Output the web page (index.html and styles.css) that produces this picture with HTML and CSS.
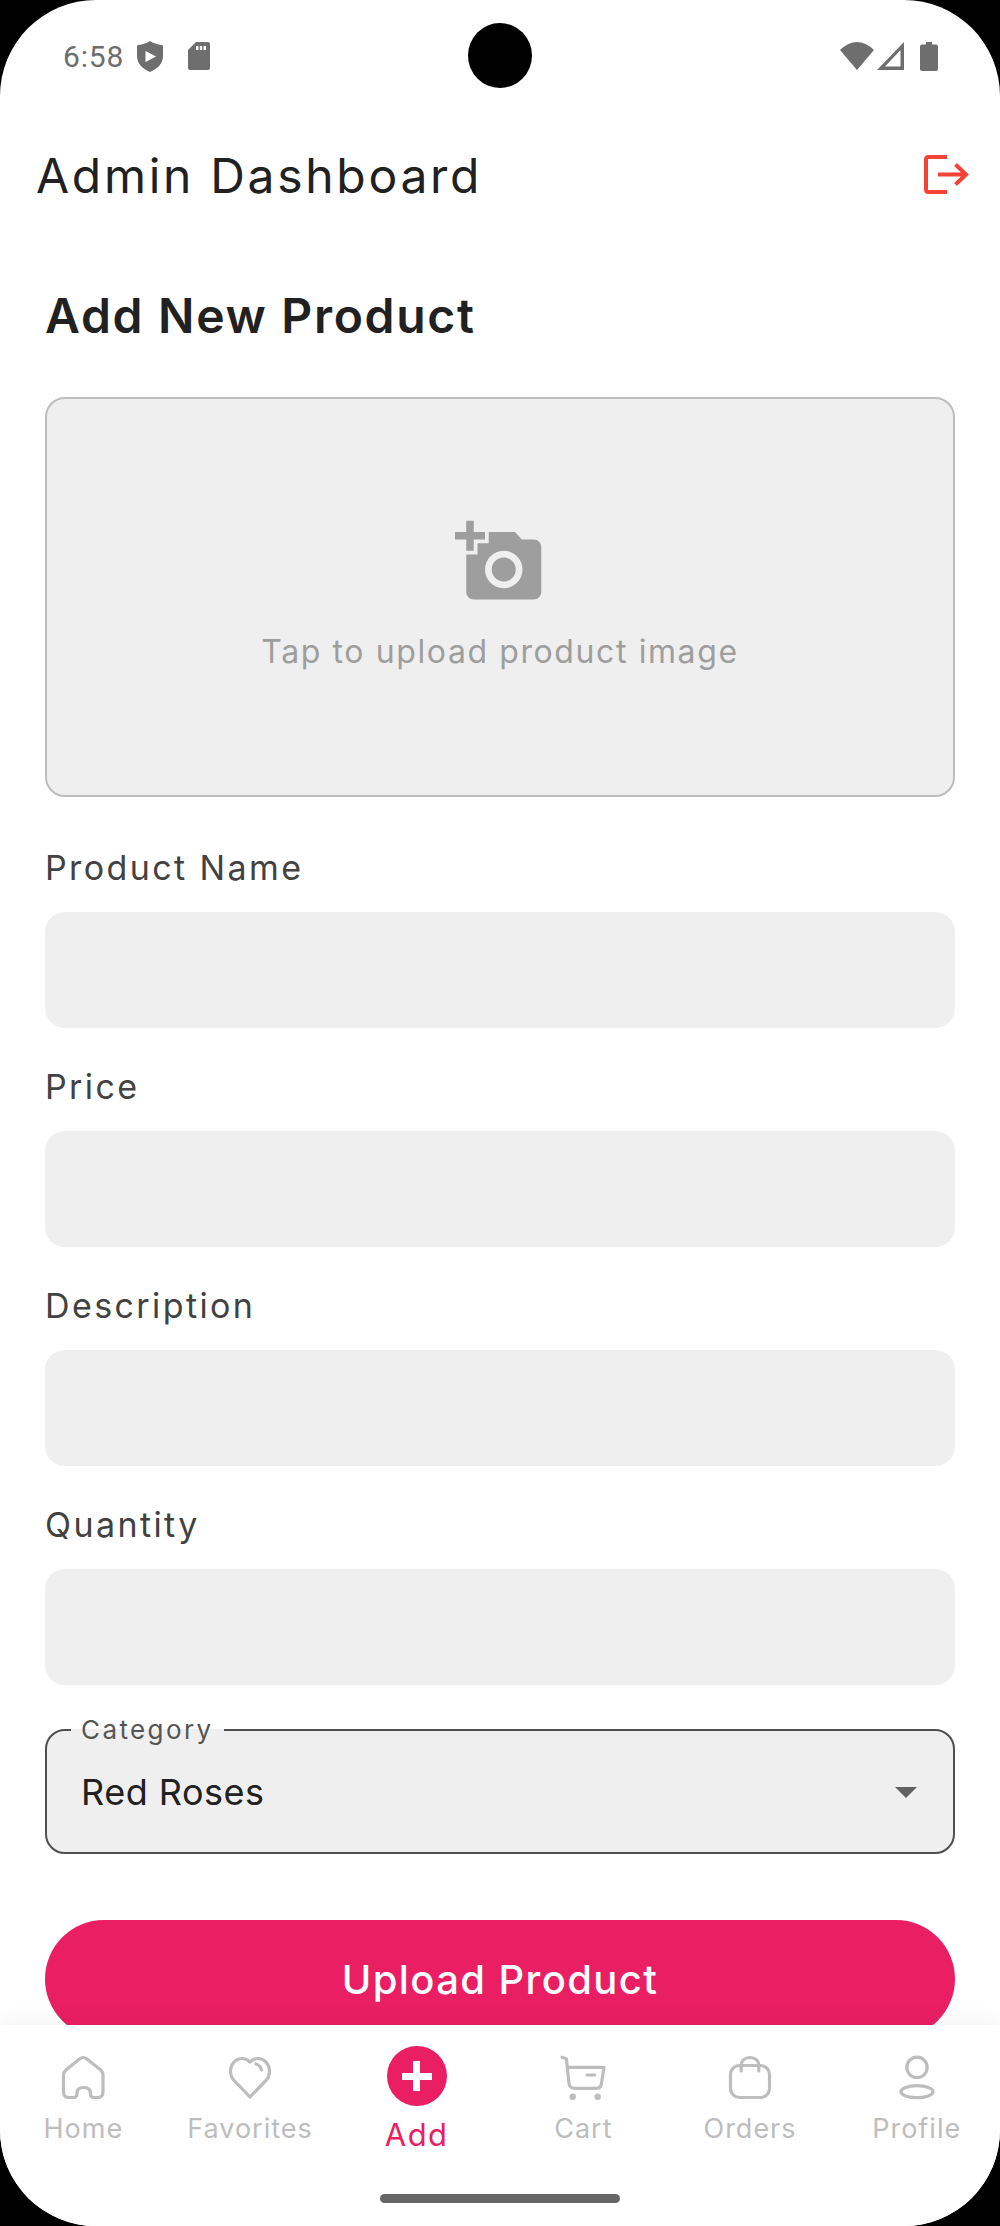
FILE: index.html
```html
<!DOCTYPE html>
<html lang="en">
<head>
  <meta charset="UTF-8">
  <meta name="viewport" content="width=device-width, initial-scale=1.0">
  <title>Admin Dashboard</title>
  <link rel="stylesheet" href="styles.css">
</head>
<body>
  <div class="screen">
    <div class="camera-hole"></div>

    <div class="status-bar">
      <div class="status-group">
        <span class="time">6:58</span>
        <svg class="icon-shield" viewBox="0 0 26 31"><path class="status-fill" d="M13 0C16 2 20 3.5 25 4Q26 4.5 26 6V15C26 23 20 28 13 31C6 28 0 23 0 15V6Q0 4.5 1 4C6 3.5 10 2 13 0Z"/><path fill="#fff" d="M8.5 10L19 15.5L8.5 21Z"/></svg>
        <svg class="icon-sd" viewBox="0 0 22 28"><path class="status-fill" d="M8 0H20Q22 0 22 2V26Q22 28 20 28H2Q0 28 0 26V8Z"/><path fill="#fff" d="M8 4h2.4v4H8zM11.8 4h2.4v4h-2.4zM15.6 4H18v4h-2.4z"/></svg>
      </div>
      <div class="status-group status-right">
        <svg class="icon-wifi" viewBox="0 0 34 28"><path class="status-fill" d="M0 8Q17 -8 34 8L17 28Z"/></svg>
        <svg class="icon-signal" viewBox="0 0 27 28"><path class="status-fill" fill-rule="evenodd" d="M27 0V28H0ZM23.5 8L8 24.5H23.5Z"/></svg>
        <svg class="icon-battery" viewBox="0 0 18 29"><path class="status-fill" d="M6 0H12V2.5H16Q18 2.5 18 4.5V27Q18 29 16 29H2Q0 29 0 27V4.5Q0 2.5 2 2.5H6Z"/></svg>
      </div>
    </div>

    <header class="app-bar">
      <h1 class="app-title">Admin Dashboard</h1>
      <svg class="icon-logout" viewBox="0 0 48 48"><path d="M25 6H6.5Q4 6 4 8.5V38.5Q4 41 6.5 41H25M16 23.5H44M33.5 13.5L44 23.5L33.5 33.5"/></svg>
    </header>

    <main class="content">
      <h2 class="page-title">Add New Product</h2>

      <div class="upload-box">
        <svg class="icon-photo" viewBox="0 0 24 24"><path fill-rule="evenodd" d="M3 4V1h2v3h3v2H5v3H3V6H0V4h3zm3 6V7h3V4h7l1.83 2H21c1.1 0 2 .9 2 2v12c0 1.1-.9 2-2 2H5c-1.1 0-2-.9-2-2V10h3zm7 9c2.76 0 5-2.24 5-5s-2.24-5-5-5-5 2.24-5 5 2.24 5 5 5zm-3.2-5c0 1.77 1.43 3.2 3.2 3.2s3.2-1.43 3.2-3.2-1.43-3.2-3.2-3.2-3.2 1.43-3.2 3.2z"/></svg>
        <span class="upload-text">Tap to upload product image</span>
      </div>

      <div class="field">
        <label class="field-label">Product Name</label>
        <div class="field-input"></div>
      </div>
      <div class="field">
        <label class="field-label">Price</label>
        <div class="field-input"></div>
      </div>
      <div class="field">
        <label class="field-label">Description</label>
        <div class="field-input"></div>
      </div>
      <div class="field">
        <label class="field-label">Quantity</label>
        <div class="field-input"></div>
      </div>

      <fieldset class="select-box">
        <legend class="select-legend">Category</legend>
        <div class="select-row">
          <span class="select-value">Red Roses</span>
          <span class="select-arrow"></span>
        </div>
      </fieldset>

      <button class="upload-btn">Upload Product</button>
    </main>

    <nav class="bottom-nav">
      <div class="nav-row">
        <div class="nav-item">
          <svg class="nav-icon" viewBox="0 0 48 48"><path d="M24.2 4.5C22.8 4.5 21.8 5 20.8 5.8L7.5 16.5C5.5 18.2 4.5 19.8 4.5 22V39C4.5 42.5 6.5 44.5 10 44.5H14.5C17 44.5 18 43.5 18 41V40C18 36.5 20.5 34.5 24.7 34.5C29 34.5 31.4 36.5 31.4 40V41C31.4 43.5 32.4 44.5 34.9 44.5H38.5C42 44.5 44 42.5 44 39V22C44 19.8 43 18.2 41 16.5L27.6 5.8C26.6 5 25.6 4.5 24.2 4.5Z"/></svg>
          <span class="nav-label">Home</span>
        </div>
        <div class="nav-item">
          <svg class="nav-icon" viewBox="0 0 48 48"><path d="M24 44L8.5 28C5.5 25 4.5 22 4.5 18.5C4.5 11 10 5.5 16 5.5C19.5 5.5 22 7 24 9C26 7 28.5 5.5 32 5.5C38 5.5 43.5 11 43.5 18.5C43.5 22 42.5 25 39.5 28Z"/><path d="M30 11C33 12 35 14.5 35.5 17"/></svg>
          <span class="nav-label">Favorites</span>
        </div>
        <div class="nav-item nav-item-active">
          <div class="add-circle"><span class="add-plus"></span></div>
          <span class="nav-label">Add</span>
        </div>
        <div class="nav-item">
          <svg class="nav-icon" viewBox="0 0 48 48"><path d="M3 4.3L7.4 5.7L10 30.3C10.4 33.5 12.5 35.3 15.7 35.3H37.4C40.2 35.3 42 33.5 42.4 30.8L45 14.3H8.4M28 22H35.7"/><circle class="wheel" cx="13.7" cy="43.7" r="3.2"/><circle class="wheel" cx="38.7" cy="43.7" r="3.2"/></svg>
          <span class="nav-label">Cart</span>
        </div>
        <div class="nav-item">
          <svg class="nav-icon" viewBox="0 0 48 48"><rect x="4.5" y="12.5" width="39" height="32" rx="9"/><path d="M15.2 18V13C15.2 7.5 19 4.5 24 4.5S32.8 7.5 32.8 13V18"/></svg>
          <span class="nav-label">Orders</span>
        </div>
        <div class="nav-item">
          <svg class="nav-icon" viewBox="0 0 48 48"><circle cx="24" cy="14.3" r="10.2"/><ellipse cx="24" cy="38.7" rx="16" ry="6"/></svg>
          <span class="nav-label">Profile</span>
        </div>
      </div>
      <div class="home-bar"></div>
    </nav>
  </div>
</body>
</html>
```

FILE: styles.css
```css
* {
  box-sizing: border-box;
  margin: 0;
  padding: 0;
}

html, body {
  width: 1000px;
  height: 2226px;
  background: #000000;
  font-family: 'Inter', 'Noto Sans', sans-serif;
  overflow: hidden;
}

.screen {
  position: relative;
  width: 1000px;
  height: 2226px;
  background: #ffffff;
  border-radius: 96px;
  overflow: hidden;
  display: flex;
  flex-direction: column;
}

.camera-hole {
  position: absolute;
  top: 23px;
  left: 468px;
  width: 64px;
  height: 65px;
  background: #000000;
  border-radius: 50%;
}

/* Status bar */
.status-bar {
  height: 119px;
  flex-shrink: 0;
  padding: 36px 62px 0 63px;
  display: flex;
  justify-content: space-between;
  align-items: flex-start;
}

.status-group {
  height: 40px;
  display: flex;
  align-items: center;
}

.time {
  font-family: 'Roboto', sans-serif;
  font-size: 30px;
  color: #6e6e6e;
  letter-spacing: 0.8px;
}

.status-fill {
  fill: #6e6e6e;
}

.icon-shield {
  width: 26px;
  height: 31px;
  margin-left: 13px;
}

.icon-sd {
  width: 22px;
  height: 28px;
  margin-left: 25px;
}

.icon-wifi {
  width: 34px;
  height: 28px;
}

.icon-signal {
  width: 27px;
  height: 28px;
  margin-left: 3px;
}

.icon-battery {
  width: 18px;
  height: 29px;
  margin-left: 16px;
}

/* App bar */
.app-bar {
  height: 112px;
  flex-shrink: 0;
  padding: 0 30px 0 36px;
  display: flex;
  align-items: center;
  justify-content: space-between;
}

.app-title {
  font-size: 48px;
  font-weight: 400;
  color: #212121;
  letter-spacing: 2.7px;
}

.icon-logout {
  width: 48px;
  height: 48px;
  fill: none;
  stroke: #f44336;
  stroke-width: 4;
}

/* Form */
.content {
  flex: 1;
  min-height: 0;
  overflow: hidden;
  padding: 0 45px;
}

.page-title {
  margin-top: 55px;
  margin-bottom: 51px;
  font-size: 48px;
  line-height: 60px;
  font-weight: 600;
  color: #212121;
  letter-spacing: 1.7px;
}

.upload-box {
  height: 400px;
  background: #efefef;
  border: 2px solid #bdbdbd;
  border-radius: 20px;
  display: flex;
  flex-direction: column;
  align-items: center;
  justify-content: center;
  gap: 20px;
}

.icon-photo {
  width: 90px;
  height: 90px;
  fill: #9e9e9e;
}

.upload-text {
  font-size: 32px;
  line-height: 50px;
  color: #9e9e9e;
  letter-spacing: 1.6px;
}

.field {
  margin-top: 34px;
  display: flex;
  flex-direction: column;
  gap: 19px;
}

.upload-box + .field {
  margin-top: 46px;
}

.field-label {
  font-size: 34px;
  line-height: 50px;
  color: #424242;
  letter-spacing: 2.4px;
}

.field-input {
  height: 116px;
  background: #efefef;
  border-radius: 20px;
}

.select-box {
  margin-top: 27px;
  padding: 0 36px 16px 34px;
  background: #efefef;
  border: 2px solid #4f4f4f;
  border-radius: 20px;
}

.select-legend {
  margin-left: -10px;
  padding: 0 10px;
  font-size: 26px;
  line-height: 36px;
  color: #555555;
  letter-spacing: 2.4px;
}

.select-row {
  height: 88px;
  display: flex;
  align-items: center;
  justify-content: space-between;
}

.select-value {
  font-size: 36px;
  color: #212121;
  letter-spacing: 0.5px;
}

.select-arrow {
  width: 0;
  height: 0;
  border-left: 11px solid transparent;
  border-right: 11px solid transparent;
  border-top: 11px solid #616161;
}

.upload-btn {
  display: block;
  width: 100%;
  height: 118px;
  margin-top: 66px;
  border: none;
  border-radius: 59px;
  background: #e91e63;
  color: #ffffff;
  font-family: inherit;
  font-size: 40px;
  font-weight: 500;
  letter-spacing: 1.4px;
}

/* Bottom nav */
.bottom-nav {
  height: 201px;
  flex-shrink: 0;
  background: #ffffff;
  box-shadow: 0 -4px 20px rgba(0, 0, 0, 0.05);
  display: flex;
  flex-direction: column;
}

.nav-row {
  padding-top: 28px;
  display: flex;
}

.nav-item {
  flex: 1;
  display: flex;
  flex-direction: column;
  align-items: center;
  gap: 8px;
}

.nav-icon {
  width: 48px;
  height: 48px;
  fill: none;
  stroke: #bdbdbd;
  stroke-width: 3.2;
  stroke-linecap: round;
  stroke-linejoin: round;
}

.wheel {
  fill: #bdbdbd;
  stroke: none;
}

.nav-label {
  font-size: 27px;
  line-height: 40px;
  color: #bdbdbd;
  letter-spacing: 1px;
}

.add-circle {
  width: 60px;
  height: 60px;
  margin-top: -7px;
  background: #e91e63;
  border-radius: 50%;
  display: flex;
  align-items: center;
  justify-content: center;
}

.add-plus {
  position: relative;
  width: 30px;
  height: 7px;
  background: #ffffff;
}

.add-plus::after {
  content: '';
  position: absolute;
  left: 11.5px;
  top: -11.5px;
  width: 7px;
  height: 30px;
  background: #ffffff;
}

.nav-item-active {
  gap: 9px;
}

.nav-item-active .nav-label {
  font-size: 31px;
  color: #e91e63;
  letter-spacing: 1.5px;
}

.home-bar {
  width: 240px;
  height: 9px;
  margin: auto auto 23px;
  background: #666666;
  border-radius: 5px;
}
```
